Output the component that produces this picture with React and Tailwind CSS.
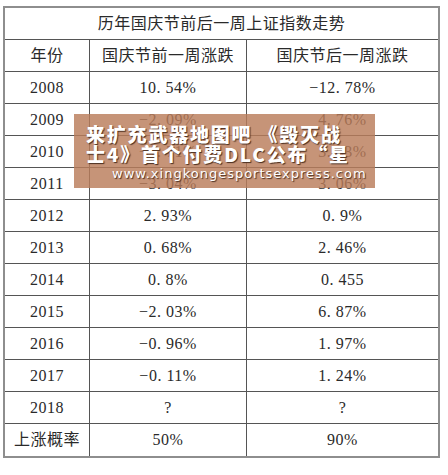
const rows = [
  ["2008", "10. 54%", "−12. 78%"],
  ["2009", "−2. 09%", "4. 76%"],
  ["2010", "−1. 71%", "3. 63%"],
  ["2011", "−3. 04%", "3. 06%"],
  ["2012", "2. 93%", "0. 9%"],
  ["2013", "0. 68%", "2. 46%"],
  ["2014", "0. 8%", "0. 455"],
  ["2015", "−2. 03%", "6. 87%"],
  ["2016", "−0. 96%", "1. 97%"],
  ["2017", "−0. 11%", "1. 24%"],
  ["2018", "?", "?"],
  ["上涨概率", "50%", "90%"],
];

const Row = ({ cells, last }) => (
  <div
    className={`flex h-[32px] items-center ${last ? "" : "border-b border-[#555]"}`}
  >
    <div className="w-[85px] h-full flex items-center justify-center border-r border-[#555]">
      {cells[0]}
    </div>
    <div className="w-[157px] h-full flex items-center justify-center border-r border-[#555]">
      {cells[1]}
    </div>
    <div className="flex-1 h-full flex items-center justify-center">
      {cells[2]}
    </div>
  </div>
);

export default function App() {
  return (
    <div className="relative w-[448px] h-[475px] bg-white overflow-hidden">
      <div
        className="ml-[3px] mt-[6px] w-[437px] border-2 border-[#8e8e8e] text-[16px] text-[#2a2a2a] tracking-[0.5px]"
        style={{ fontFamily: '"Liberation Serif", "Noto Sans CJK SC", serif' }}
      >
        <div className="h-[32px] flex items-center justify-center border-b border-[#555]">
          历年国庆节前后一周上证指数走势
        </div>
        <Row cells={["年份", "国庆节前一周涨跌", "国庆节后一周涨跌"]} />
        {rows.map((r, i) => (
          <Row key={r[0]} cells={r} last={i === rows.length - 1} />
        ))}
      </div>

      {/* watermark caption */}
      <div className="absolute left-[74px] top-[114px] w-[301px] h-[74px] bg-[rgba(185,125,90,0.82)] pl-[12px] pt-[10px] text-white">
        <div
          className="text-[19px] leading-[20px] font-black tracking-[1.8px] whitespace-nowrap [text-shadow:1px_1px_1px_#4a2e20]"
          style={{ fontFamily: '"Noto Sans CJK SC", sans-serif' }}
        >
          <div>来扩充武器地图吧&nbsp;《毁灭战</div>
          <div>士4》首个付费DLC公布“星</div>
        </div>
        <div
          className="mt-[3px] pl-[26px] text-[13px] leading-[14px] tracking-[1px] whitespace-nowrap [text-shadow:1px_1px_1px_#4a2e20]"
          style={{ fontFamily: '"DejaVu Sans", sans-serif' }}
        >
          www.xingkongesportsexpress.com
        </div>
      </div>
    </div>
  );
}
